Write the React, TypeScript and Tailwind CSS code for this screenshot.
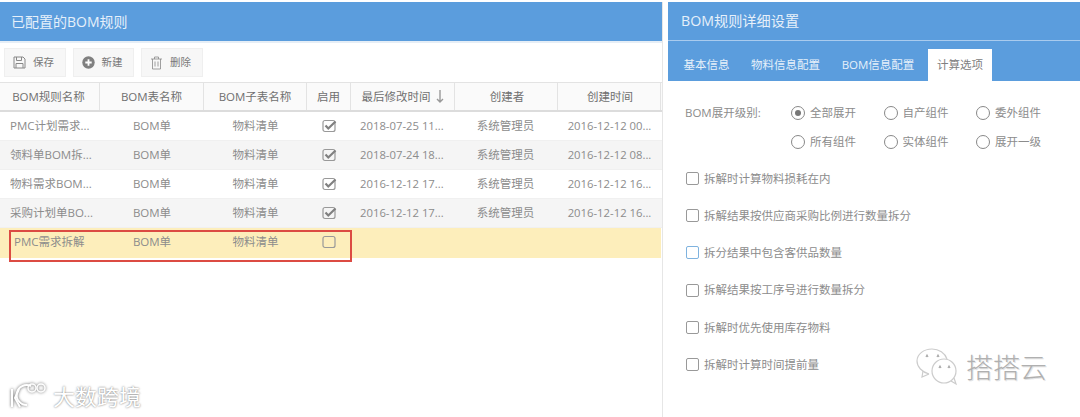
import React from 'react';

const font = 'font-["Open_Sans","Noto_Sans_CJK_SC",sans-serif]';

type Row = {
  name: string;
  table: string;
  sub: string;
  enabled: boolean;
  modified: string;
  creator: string;
  created: string;
};

const rows: Row[] = [
  { name: 'PMC计划需求...', table: 'BOM单', sub: '物料清单', enabled: true, modified: '2018-07-25 11...', creator: '系统管理员', created: '2016-12-12 00...' },
  { name: '领料单BOM拆...', table: 'BOM单', sub: '物料清单', enabled: true, modified: '2018-07-24 18...', creator: '系统管理员', created: '2016-12-12 08...' },
  { name: '物料需求BOM...', table: 'BOM单', sub: '物料清单', enabled: true, modified: '2016-12-12 17...', creator: '系统管理员', created: '2016-12-12 16...' },
  { name: '采购计划单BO...', table: 'BOM单', sub: '物料清单', enabled: true, modified: '2016-12-12 17...', creator: '系统管理员', created: '2016-12-12 16...' },
];

const radios = [
  ['全部展开', '自产组件', '委外组件'],
  ['所有组件', '实体组件', '展开一级'],
];

const options = [
  '拆解时计算物料损耗在内',
  '拆解结果按供应商采购比例进行数量拆分',
  '拆分结果中包含客供品数量',
  '拆解结果按工序号进行数量拆分',
  '拆解时优先使用库存物料',
  '拆解时计算时间提前量',
];

function SaveIcon() {
  return (
    <svg width="13" height="13" viewBox="0 0 13 13" fill="none" stroke="#888" strokeWidth="1">
      <path d="M1 1h9l2 2v9H1z" />
      <path d="M3.5 1v3.5h5V1M3 12V7.5h7V12" />
    </svg>
  );
}

function PlusIcon() {
  return (
    <svg width="13" height="13" viewBox="0 0 13 13">
      <circle cx="6.5" cy="6.5" r="6.2" fill="#808080" />
      <path d="M6.5 3.3v6.4M3.3 6.5h6.4" stroke="#fff" strokeWidth="1.8" />
    </svg>
  );
}

function TrashIcon() {
  return (
    <svg width="13" height="14" viewBox="0 0 13 14" fill="none" stroke="#888" strokeWidth="0.8">
      <path d="M1 3h11M4.5 3V1h4v2M2.5 3v10h8V3M5 5.5v5M8 5.5v5" />
    </svg>
  );
}

function TableCheck({ checked }: { checked: boolean }) {
  return (
    <svg width="15" height="14" viewBox="0 0 15 14" fill="none">
      <rect x="1" y="1.5" width="12" height="11" rx="2" stroke="#999" strokeWidth="1.2" />
      {checked && <path d="M3.5 6.5l2.8 3L13.5 2.5" stroke="#808080" strokeWidth="2.2" />}
    </svg>
  );
}

function ToolButton({ icon, label }: { icon: React.ReactNode; label: string }) {
  return (
    <div className="flex h-[29px] w-[61.5px] items-center gap-[7px] border border-[#efefef] bg-[#f7f7f7] pl-[8px] text-[10.5px] text-[#777]">
      {icon}
      <span>{label}</span>
    </div>
  );
}

function Cell({ width, children, className = '' }: { width: string; children?: React.ReactNode; className?: string }) {
  return <div className={`flex h-full shrink-0 items-center justify-center ${width} ${className}`}>{children}</div>;
}

function TableRow({ row, striped }: { row: Row; striped: boolean }) {
  return (
    <div className={`flex h-[29px] items-center border-b border-[#f0f0f0] text-[11.5px] text-[#8c8c8c] ${striped ? 'bg-[#f5f5f5]' : 'bg-white'}`}>
      <Cell width="w-[100px]" className="!justify-start pl-[10px]">{row.name}</Cell>
      <Cell width="w-[104px]">{row.table}</Cell>
      <Cell width="w-[103px]">{row.sub}</Cell>
      <Cell width="w-[44px]"><TableCheck checked={row.enabled} /></Cell>
      <Cell width="w-[104px]" className="!justify-start pl-[9px] text-[11.3px]">{row.modified}</Cell>
      <Cell width="w-[103px]" className="pr-[2px]">{row.creator}</Cell>
      <Cell width="w-[103px]" className="text-[11.3px]">{row.created}</Cell>
    </div>
  );
}

function Radio({ label, selected }: { label: string; selected?: boolean }) {
  return (
    <div className="flex w-[92.5px] items-center gap-[5px] text-[11.5px] text-[#8c8c8c]">
      <span className="flex size-[14px] items-center justify-center rounded-full border-[1.5px] border-[#888]">
        {selected && <span className="size-[6px] rounded-full bg-[#777]" />}
      </span>
      <span>{label}</span>
    </div>
  );
}

function Head({ width, children, className = '' }: { width: string; children: React.ReactNode; className?: string }) {
  return (
    <div className={`flex h-full shrink-0 items-center justify-center border-r border-[#e3e3e3] ${width} ${className}`}>{children}</div>
  );
}

export default function App() {
  return (
    <div className={`relative flex h-[417px] w-[1080px] overflow-hidden bg-white pt-[2px] ${font}`}>
      <div className="w-[663px] shrink-0 border-r border-[#e6e6e6]">
        <div className="flex h-[39px] items-center bg-[#5b9ddd] pl-[11px] text-[14px] text-[#e6f0fa]">已配置的BOM规则</div>
        <div className="flex h-[41px] items-center gap-[7px] border-t-2 border-[#e6eef6] pl-[4px]">
          <ToolButton icon={<SaveIcon />} label="保存" />
          <ToolButton icon={<PlusIcon />} label="新建" />
          <ToolButton icon={<TrashIcon />} label="删除" />
        </div>
        <div className="flex h-[30px] w-[662px] items-center border-t border-b-2 border-[#e3e3e3] border-b-[#dcdcdc] bg-[#fafafa] text-[11.5px] text-[#707070]">
          <Head width="w-[100px]" className="pr-[2px]">BOM规则名称</Head>
          <Head width="w-[104px]">BOM表名称</Head>
          <Head width="w-[103px]">BOM子表名称</Head>
          <Head width="w-[44px]">启用</Head>
          <Head width="w-[104px]">
            <span className="flex items-center gap-[5px]">
              最后修改时间
              <svg width="8" height="13" viewBox="0 0 8 13" fill="none" stroke="#999" strokeWidth="1.4">
                <path d="M4 0v12M1 9l3 3 3-3" />
              </svg>
            </span>
          </Head>
          <Head width="w-[103px]" className="pl-[2px]">创建者</Head>
          <Head width="w-[103px]" className="pl-[2px]">创建时间</Head>
        </div>
        <div className="w-[662px]">
          {rows.map((row, i) => (
            <TableRow key={row.name} row={row} striped={i % 2 === 1} />
          ))}
          <div className="flex h-[30px] w-[661px] items-center bg-[#fdeebb] pb-[2px] text-[11.5px] text-[#8c8c8c]">
            <Cell width="w-[100px]" className="!justify-start pl-[14px]">PMC需求拆解</Cell>
            <Cell width="w-[104px]">BOM单</Cell>
            <Cell width="w-[103px]">物料清单</Cell>
            <Cell width="w-[44px]"><TableCheck checked={false} /></Cell>
          </div>
        </div>
      </div>

      <div className="ml-[5px] flex-1">
        <div className="flex h-[39px] items-center border-b border-[#a9cbee] bg-[#5b9ddd] pl-[13px] text-[14.2px] text-[#e6f0fa]">BOM规则详细设置</div>
        <div className="flex h-[40px] items-end bg-[#5b9ddd] pl-[5px] text-[11.5px] text-[#e6f0fa]">
          <div className="flex h-[32px] w-[67px] items-center justify-center">基本信息</div>
          <div className="flex h-[32px] w-[91px] items-center justify-center">物料信息配置</div>
          <div className="mr-[3px] flex h-[32px] w-[94px] items-center justify-center">BOM信息配置</div>
          <div className="flex h-[32px] w-[64px] items-center justify-center bg-white text-[#808080]">计算选项</div>
        </div>
        <div className="pl-[17px] pt-[25px]">
          <div className="flex">
            <div className="flex h-[14px] w-[106px] items-center text-[11.5px] text-[#8c8c8c]">BOM展开级别:</div>
            <div className="flex flex-col gap-[15px]">
              {radios.map((line, i) => (
                <div key={line[0]} className="flex h-[14px]">
                  {line.map((label, j) => (
                    <Radio key={label} label={label} selected={i === 0 && j === 0} />
                  ))}
                </div>
              ))}
            </div>
          </div>
          <div className="ml-[1px] mt-[23px] flex flex-col gap-[24.2px]">
            {options.map((label, i) => (
              <div key={label} className="flex h-[13px] items-center gap-[5px] text-[11.5px] text-[#8c8c8c]">
                <span className={`size-[13px] rounded-[2px] border-[1.5px] ${i === 2 ? 'border-[#7fb3df]' : 'border-[#999]'}`} />
                <span>{label}</span>
              </div>
            ))}
          </div>
        </div>
      </div>

      <div className="absolute left-[9px] top-[230px] h-[32px] w-[343px] border-2 border-[#dc4b43]" />

      <div className="absolute left-[10px] top-[381px] flex items-center gap-[3px]">
        <svg width="40" height="30" viewBox="0 0 40 30" fill="none" stroke="#fff" strokeWidth="2" className="drop-shadow-[0_0_1.5px_rgba(80,80,80,0.9)]">
          <path d="M2 8v18" />
          <path d="M9 8l-4 9 5 9" />
          <path d="M21 5a10 10 0 1 0 -4 19" />
          <circle cx="22" cy="7" r="4" strokeWidth="1.5" />
          <circle cx="31" cy="7" r="4" strokeWidth="1.5" />
        </svg>
        <span className="text-[22px] leading-none text-white [text-shadow:0_0_2px_#666]">大数跨境</span>
      </div>

      <div className="absolute left-[915px] top-[347px] flex items-center gap-[7px]">
        <svg width="44" height="40" viewBox="0 0 44 40" fill="none" stroke="#ccc" strokeWidth="1.2">
          <path d="M14 27C7 25 2 20 2 14 2 7 9 2 17 2c7 0 13 4 15 10" />
          <path d="M8 24l-1 6 7-3" />
          <circle cx="29" cy="24" r="12" />
          <path d="M36 34l5 3-2-6" />
          <path d="M11 10l1-2 1 2M22 10l1-2 1 2M24 21l1-2 1 2M33 21l1-2 1 2" stroke="#aaa" />
        </svg>
        <span className="text-[27px] leading-none font-light text-[#b0b0b0] [text-shadow:1px_1px_0_#e4e4e4]">搭搭云</span>
      </div>
    </div>
  );
}
